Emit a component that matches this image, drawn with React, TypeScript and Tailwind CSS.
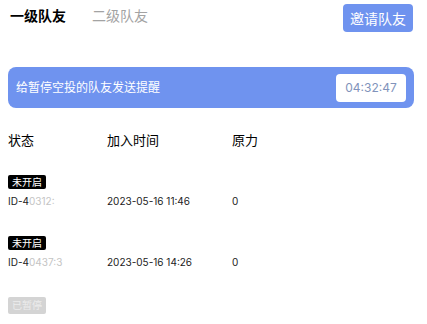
import React from 'react'

const rows = [
  { status: '未开启', paused: false, id: '4', rest: '0312:', time: '2023-05-16 11:46', power: '0' },
  { status: '未开启', paused: false, id: '4', rest: '0437:3', time: '2023-05-16 14:26', power: '0' },
  { status: '已暂停', paused: true, id: '', rest: '', time: '', power: '' },
]

export default function App() {
  return (
    <div
      className="w-[427px] h-[324px] overflow-hidden bg-white text-black"
      style={{ fontFamily: 'Inter, "Noto Sans CJK SC", sans-serif' }}
    >
      <div className="flex items-center justify-between pl-[10px] pr-[14px] pt-[4px]">
        <div className="mb-[4px] flex items-center gap-[26px] text-[14px] leading-[20px]">
          <span className="font-bold">一级队友</span>
          <span className="text-[#a3a3a3]">二级队友</span>
        </div>
        <button className="h-[28px] w-[70px] rounded-[4px] bg-[#6f93ef] text-[14px] text-white">
          邀请队友
        </button>
      </div>

      <div className="ml-[8px] mr-[13px] mt-[35px] flex h-[41px] items-center justify-between rounded-[8px] bg-[#6f93ef] pl-[8px] pr-[8px]">
        <span className="text-[12px] text-white">给暂停空投的队友发送提醒</span>
        <div className="flex h-[28px] w-[70px] items-center justify-center rounded-[4px] bg-white text-[12px] text-[#8193bb]">
          04:32:47
        </div>
      </div>

      <div className="mt-[23px] flex px-[8px] text-[13px] leading-[18px]">
        <span className="w-[99px]">状态</span>
        <span className="w-[125px]">加入时间</span>
        <span>原力</span>
      </div>

      <div className="mt-[26px] flex flex-col gap-[28px] px-[8px]">
        {rows.map((r, i) => (
          <div key={i} className="flex flex-col">
            <span
              className={`w-fit rounded-[2px] px-[4px] text-[10px] leading-[14px] ${
                r.paused ? 'h-[17px] bg-[#d4d4d4] leading-[17px] text-[#ececec]' : 'bg-black text-white'
              }`}
            >
              {r.status}
            </span>
            {!r.paused && (
              <div className="mt-[5px] flex text-[10px] leading-[14px] text-[#222]">
                <span className="w-[99px]">
                  ID-{r.id}
                  <span className="text-[#c4c4c4]">{r.rest}</span>
                </span>
                <span className="w-[125px]">{r.time}</span>
                <span>{r.power}</span>
              </div>
            )}
          </div>
        ))}
      </div>
    </div>
  )
}
